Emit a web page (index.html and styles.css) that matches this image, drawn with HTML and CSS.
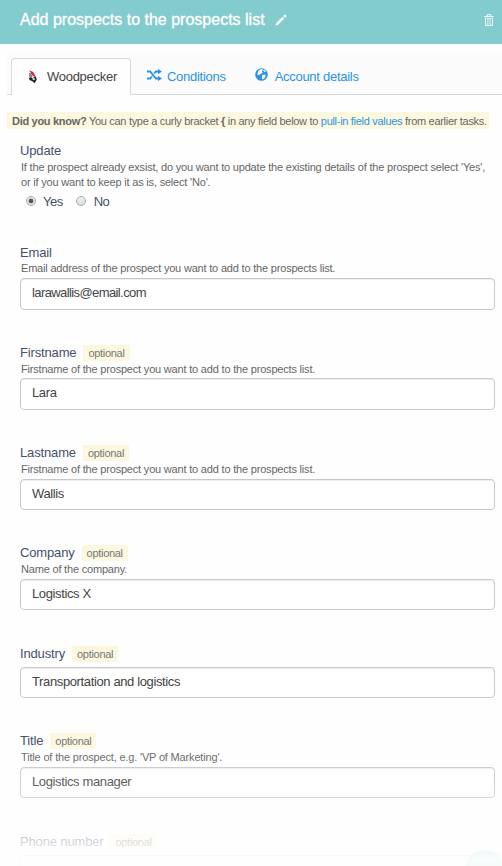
FILE: index.html
```
<!DOCTYPE html>
<html>
<head>
    <meta charset="UTF-8">
    <title>Add prospects to the prospects list</title>
    <link rel="stylesheet" href="styles.css">
</head>
<body>
<div class="panel">
    <div class="header">
        <h1>Add prospects to the prospects list</h1>
        <svg class="icon-edit" width="12" height="12" viewBox="0 0 12 12">
            <path fill="#fff" d="M0.5 11.5l.8-2.6 6.2-6.2 1.8 1.8-6.2 6.2zM8.2 2l1.4-1.3q.5-.4 1 0l.7.7q.5.5 0 1L10 3.8z"/>
        </svg>
        <svg class="icon-trash" width="10" height="12" viewBox="0 0 10 12">
            <path fill="none" stroke="#fff" stroke-opacity=".85" d="M0 2.5h10M3.2 2V.6h3.6V2M1.5 4v7.5h7V4"/>
            <path fill="none" stroke="#fff" stroke-width=".7" stroke-opacity=".8" d="M1 4.2h8M3.6 4v7M5 4v7M6.4 4v7"/>
        </svg>
    </div>
    <div class="tabs">
        <div class="tab active">
            <svg class="icon-bird" width="10" height="14" viewBox="0 0 10 14">
                <path fill="#c5304a" d="M1.2 .3l4 1.8 2.8 5-2.8-.8-2-2.2z"/>
                <path fill="#888" d="M1 2.8l2.2 1 1.4 2.4L3 8 1.2 7z"/>
                <path fill="#222" d="M.8 8l2.4-.8 1 1 3.4-1.9L8.8 9.5 6.5 13.2 4.4 11.2 1.6 10z"/>
                <path fill="#eee" d="M4 8.7l2.4-.9.5 1.6-1.4.8z"/>
            </svg>
            <span class="tab-name">Woodpecker</span>
        </div>
        <div class="tab conditions">
            <svg width="15" height="12" viewBox="0 0 15 12">
                <path fill="none" stroke="#2b92e4" stroke-width="1.9" d="M0 2.5h3.2l5.6 7H12M0 9.5h3.2l1.6-2M7.2 4.5l1.6-2H12"/>
                <path fill="#2b92e4" d="M11 0l4 2.6L11 5.2zM11 6.8l4 2.6-4 2.6z"/>
            </svg>
            <span class="tab-name">Conditions</span>
        </div>
        <div class="tab account">
            <svg width="13" height="13" viewBox="0 0 13 13">
                <circle cx="6.5" cy="6.5" r="6.3" fill="#2b92e4"/>
                <path fill="#fbfbfb" d="M4.5 1.4l2.8-.4.6 1.4-1.2 1.1 1 .8-1.2 1.4-1.6.4-.7 1.2-1.9-.6.5-2.5zM8 2.3l1.6-.5 1.5 1.7-1.3.8zM7.2 7l2.6-.4 1 1.3-1.6 2.8-1.8.8-.5-2.2z"/>
            </svg>
            <span class="tab-name">Account details</span>
        </div>
    </div>
    <p class="tip"><b>Did you know?</b> You can type a curly bracket <b>{</b> in any field below to <a>pull-in field values</a> from earlier tasks.</p>
    <div class="form">
        <div class="field update">
            <div class="label">Update</div>
            <p class="help">If the prospect already exsist, do you want to update the existing details of the prospect select 'Yes',<br>or if you want to keep it as is, select 'No'.</p>
            <div class="radios">
                <span class="radio checked"></span><span class="radio-name">Yes</span>
                <span class="radio"></span><span class="radio-name">No</span>
            </div>
        </div>
        <div class="field">
            <div class="label">Email</div>
            <p class="help">Email address of the prospect you want to add to the prospects list.</p>
            <div class="input email">larawallis@email.com</div>
        </div>
        <div class="field firstname">
            <div class="label">Firstname <span class="optional">optional</span></div>
            <p class="help">Firstname of the prospect you want to add to the prospects list.</p>
            <div class="input">Lara</div>
        </div>
        <div class="field short">
            <div class="label">Lastname <span class="optional">optional</span></div>
            <p class="help">Firstname of the prospect you want to add to the prospects list.</p>
            <div class="input">Wallis</div>
        </div>
        <div class="field short company">
            <div class="label">Company <span class="optional">optional</span></div>
            <p class="help">Name of the company.</p>
            <div class="input">Logistics X</div>
        </div>
        <div class="field short industry">
            <div class="label">Industry <span class="optional">optional</span></div>
            <div class="input">Transportation and logistics</div>
        </div>
        <div class="field short title">
            <div class="label">Title <span class="optional">optional</span></div>
            <p class="help">Title of the prospect, e.g. 'VP of Marketing'.</p>
            <div class="input">Logistics manager</div>
        </div>
        <div class="field short phone">
            <div class="label">Phone number <span class="optional">optional</span></div>
            <div class="input"></div>
        </div>
    </div>
    <div class="chat"></div>
    <div class="fade"></div>
</div>
</body>
</html>
```
FILE: styles.css
```
* {
    box-sizing: border-box;
}
body {
    margin: 0;
    font-family: "Liberation Sans", Arial, sans-serif;
    background: #fefefe;
    color: #46506a;
}
h1, p {
    margin: 0;
    font-weight: normal;
}
.panel {
    position: relative;
    width: 502px;
    height: 866px;
    overflow: hidden;
}
.header {
    display: flex;
    align-items: center;
    height: 44px;
    padding: 0 8px 5px 20px;
    background: #83cccd;
    color: #fff;
}
.header h1 {
    font-size: 16px;
    line-height: 20px;
    white-space: nowrap;
    -webkit-text-stroke: 0.3px #fff;
}
.icon-edit {
    margin-left: 10px;
}
.icon-trash {
    margin-left: auto;
}
.tabs {
    display: flex;
    align-items: flex-end;
    height: 42px;
    margin: 9px 0 0 7px;
    padding-left: 4px;
    background: #fbfbfb;
    border-bottom: 1px solid #d9d9d9;
}
.tab {
    display: flex;
    align-items: center;
    height: 36px;
    font-size: 13px;
    letter-spacing: -0.28px;
    white-space: nowrap;
    color: #2b92e4;
}
.tab.active {
    width: 120px;
    height: 37px;
    margin-bottom: -1px;
    padding-left: 16px;
    background: #fefefe;
    border: 1px solid #d9d9d9;
    border-bottom: 0;
    border-radius: 4px 4px 0 0;
    color: #444;
}
.active .tab-name {
    margin: 0 0 2px 9px;
}
.conditions {
    margin-left: 16px;
}
.conditions .tab-name {
    margin-left: 5px;
}
.account {
    margin-left: 29px;
}
.account .tab-name {
    margin-left: 7px;
}
.tab svg {
    flex: none;
}
.conditions svg, .account svg {
    margin-bottom: 3px;
}
.tip {
    width: 482px;
    height: 17px;
    margin: 17px 0 0 7px;
    padding-left: 5px;
    background: #fcf8e0;
    font-size: 11px;
    line-height: 18px;
    letter-spacing: -0.3px;
    white-space: nowrap;
    color: #666;
}
.tip a {
    color: #2b92e4;
}
.form {
    padding: 12px 7px 0 20px;
}
.field {
    height: 100px;
}
.update {
    height: 102px;
}
.label {
    display: flex;
    align-items: center;
    height: 18px;
    font-size: 13px;
    letter-spacing: -0.15px;
    white-space: nowrap;
}
.optional {
    height: 16px;
    margin: 2px 0 0 7px;
    padding: 0 5px;
    background: #fcf8e0;
    font-size: 11px;
    line-height: 17px;
    letter-spacing: -0.3px;
    color: #777;
}
.help {
    margin-bottom: 3px;
    padding-left: 1px;
    font-size: 11px;
    line-height: 14px;
    letter-spacing: -0.19px;
    white-space: nowrap;
    color: #666;
}
.update .help {
    padding-top: 1px;
    line-height: 15px;
}
.firstname .help {
    padding-top: 1px;
    margin-bottom: 2px;
}
.input {
    height: 32px;
    padding-left: 11px;
    border: 1px solid #c8c8c8;
    border-radius: 4px;
    background: #fff;
    box-shadow: inset 0 1px 1px #eee;
    font-size: 13px;
    line-height: 28px;
    letter-spacing: -0.37px;
    color: #444;
}
.input.email {
    letter-spacing: -0.6px;
}
.short .help {
    padding-top: 1px;
    margin-bottom: 3px;
}
.short .input {
    height: 31px;
}
.company {
    height: 101px;
}
.industry {
    height: 87px;
}
.industry .input, .phone .input {
    margin-top: 5px;
}
.title {
    height: 101px;
}
.title .help {
    letter-spacing: -0.17px;
}
.radios {
    display: flex;
    align-items: center;
    height: 18px;
    margin-top: -1px;
    padding-left: 6px;
    font-size: 13px;
}
.radio {
    width: 10px;
    height: 10px;
    border: 1px solid #aaa;
    border-radius: 50%;
    background: linear-gradient(#eee, #ddd);
}
.radio.checked {
    background: radial-gradient(circle, #555 0 2px, #e6e6e6 2.7px);
}
.radio-name {
    margin: 0 13px 0 7px;
    letter-spacing: -0.5px;
}
.radio-name:last-child {
    margin-left: 8px;
}
/* help bubble in the corner, mostly off screen */
.chat {
    position: absolute;
    left: 465px;
    top: 850px;
    width: 40px;
    height: 40px;
    border-radius: 50%;
    background: #a8dfda;
}
.fade {
    position: absolute;
    left: 0;
    right: 0;
    bottom: 0;
    height: 126px;
    background: linear-gradient(rgba(254,254,254,0), rgba(254,254,254,.15) 35%, rgba(254,254,254,.75) 80%, rgba(254,254,254,.88) 91%, rgba(254,254,254,.96) 94%, rgba(254,254,254,.9));
}
```
